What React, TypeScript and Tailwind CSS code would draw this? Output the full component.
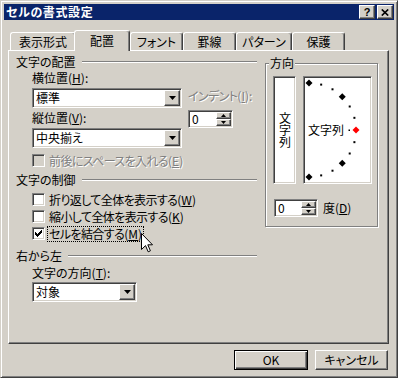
import React from 'react';

// classic win2000 bevels
const raised =
  'border border-t-white border-l-white border-r-[#404040] border-b-[#404040] shadow-[inset_-1px_-1px_0_#808080]';
const sunken =
  'border border-t-[#808080] border-l-[#808080] border-r-white border-b-white shadow-[inset_1px_1px_0_#404040,inset_-1px_-1px_0_#d4d0c8]';
const grayText = 'text-[#808080] [text-shadow:1px_1px_0_#fff]';

function Key({ k }: { k: string }) {
  return (
    <>
      (<span className="underline underline-offset-[1px]">{k}</span>)
    </>
  );
}

// kana-heavy labels run a little wide in Noto, tighten them
function Tight({ children }: { children: React.ReactNode }) {
  return <span className="tracking-[-0.6px]">{children}</span>;
}

function Combo({ value, className }: { value: string; className: string }) {
  return (
    <div className={`${className} h-[20px] p-[1px] flex bg-white ${sunken}`}>
      <div className="flex-1 pl-[2px] leading-[16px] whitespace-nowrap">{value}</div>
      <div className={`w-[16px] h-[16px] flex items-center justify-center bg-[#d4d0c8] ${raised}`}>
        <svg width="7" height="4" viewBox="0 0 7 4">
          <path d="M0 0h7L3.5 4z" fill="#000" />
        </svg>
      </div>
    </div>
  );
}

function Spin({ className }: { className: string }) {
  return (
    <div className={`${className} h-[18px] p-[1px] flex bg-white ${sunken}`}>
      <div className="flex-1 pl-[2px] leading-[14px]">0</div>
      <div className="w-[15px] flex flex-col">
        <div className={`h-[7px] flex items-center justify-center bg-[#d4d0c8] ${raised}`}>
          <svg width="5" height="3" viewBox="0 0 5 3">
            <path d="M2.5 0L5 3H0z" fill="#000" />
          </svg>
        </div>
        <div className={`h-[7px] flex items-center justify-center bg-[#d4d0c8] ${raised}`}>
          <svg width="5" height="3" viewBox="0 0 5 3">
            <path d="M0 0h5L2.5 3z" fill="#000" />
          </svg>
        </div>
      </div>
    </div>
  );
}

function CheckBox({ checked, disabled }: { checked?: boolean; disabled?: boolean }) {
  return (
    <div
      className={`w-[13px] h-[13px] shrink-0 p-[1px] flex items-center justify-center ${sunken} ${
        disabled ? 'bg-[#d4d0c8]' : 'bg-white'
      }`}
    >
      {checked && (
        <svg width="7" height="7" viewBox="0 0 7 7" shapeRendering="crispEdges">
          <path
            d="M6 0h1v1h-1z M5 1h2v1h-2z M0 2h1v1h-1z M4 2h3v1h-3z M0 3h2v1h-2z M3 3h3v1h-3z M0 4h5v1h-5z M1 5h3v1h-3z M2 6h1v1h-1z"
            fill="#000"
          />
        </svg>
      )}
    </div>
  );
}

function Section({ label }: { label: string }) {
  return (
    <div className="h-[14px] flex items-center">
      <span className="leading-[14px] whitespace-nowrap">{label}</span>
      <div className="flex-1 ml-[6px] h-[2px] border-t border-b border-t-[#808080] border-b-white" />
    </div>
  );
}

const tabs = [
  { label: '表示形式', w: 'w-[66px]' },
  { label: '配置', w: 'w-[56px]', active: true },
  { label: 'フォント', w: 'w-[53px]' },
  { label: '罫線', w: 'w-[53px]' },
  { label: 'パターン', w: 'w-[56px]' },
  { label: '保護', w: 'w-[53px]' },
];

function Dial() {
  const cx = 4;
  const cy = 52;
  const r = 47;
  const marks = [];
  for (let a = -90; a <= 90; a += 15) {
    const rad = (a * Math.PI) / 180;
    marks.push({ a, x: cx + r * Math.cos(rad), y: cy - r * Math.sin(rad) });
  }

  return (
    <div className={`relative w-[69px] h-[108px] p-[1px] bg-white ${sunken}`}>
      <svg width="65" height="104" viewBox="0 0 65 104">
        {marks.map((m) => {
          const big = Math.abs(m.a) === 90 || Math.abs(m.a) === 45 || m.a === 0;
          if (big) {
            const d = 3.5;
            return (
              <polygon
                key={m.a}
                points={`${m.x},${m.y - d} ${m.x + d},${m.y} ${m.x},${m.y + d} ${m.x - d},${m.y}`}
                fill={m.a === 0 ? '#ff0000' : '#000'}
              />
            );
          }
          return <rect key={m.a} x={m.x - 1} y={m.y - 1} width="2" height="2" fill="#000" />;
        })}
        <rect x="43.5" y="51.5" width="1.5" height="1.5" fill="#000" />
      </svg>
      <span className="absolute left-[4px] top-[46px] leading-[14px]">文字列</span>
    </div>
  );
}

export default function App() {
  return (
    <div className="relative w-[398px] h-[378px] bg-[#d4d0c8] p-[3px] border border-t-[#d4d0c8] border-l-[#d4d0c8] border-r-[#404040] border-b-[#404040] shadow-[inset_1px_1px_0_#fff,inset_-1px_-1px_0_#808080] text-[12px] text-black font-['Noto_Sans_CJK_JP',sans-serif] [font-feature-settings:'palt'] overflow-hidden select-none">
      {/* Title bar */}
      <div className="h-[16px] bg-[#0a246a] flex items-center pl-[2px] pr-[1px]">
        <span className="flex-1 text-white font-bold leading-[14px] tracking-[0.6px]">セルの書式設定</span>
        <div className="flex gap-[2px]">
          <div className={`w-[16px] h-[14px] flex items-center justify-center bg-[#d4d0c8] ${raised}`}>
            <span className="font-['Liberation_Sans',sans-serif] font-bold text-[11px] leading-[11px]">?</span>
          </div>
          <div className={`w-[16px] h-[14px] flex items-center justify-center bg-[#d4d0c8] ${raised}`}>
            <svg width="8" height="7" viewBox="0 0 8 7">
              <path d="M0.8 0.5L7.2 6.5M7.2 0.5L0.8 6.5" stroke="#000" strokeWidth="1.7" />
            </svg>
          </div>
        </div>
      </div>

      {/* Tabs */}
      <div className="mt-[10px] ml-[6px] h-[20px] flex items-end">
        {tabs.map((t) => (
          <div
            key={t.label}
            className={`${t.w} flex items-center justify-center bg-[#d4d0c8] border-t border-l border-r border-t-white border-l-white border-r-[#404040] shadow-[inset_-1px_0_0_#808080] rounded-t-[3px] whitespace-nowrap ${
              t.active ? 'relative z-10 -ml-[2px] h-[21px] -mb-[1px]' : 'h-[18px]'
            }`}
          >
            {t.label}
          </div>
        ))}
      </div>

      {/* Panel */}
      <div className="ml-[4px] w-[381px] h-[294px] border border-t-white border-l-white border-r-[#404040] border-b-[#404040] shadow-[inset_-1px_-1px_0_#808080] pt-[4px] pl-[7px] flex items-start">
        <div className="w-[241px] flex flex-col">
          <Section label="文字の配置" />
          <div className="mt-[2px] pl-[16px] flex">
            <div className="w-[150px] flex flex-col">
              <div className="h-[14px] leading-[14px]">
                横位置<Key k="H" />:
              </div>
              <Combo value="標準" className="mt-[3px] w-full" />
              <div className="mt-[3px] h-[14px] leading-[14px]">
                縦位置<Key k="V" />:
              </div>
              <Combo value="中央揃え" className="mt-[3px] w-full" />
            </div>
            <div className="ml-[6px] flex flex-col">
              <div className={`mt-[18px] h-[14px] leading-[14px] whitespace-nowrap ${grayText}`}>
                <Tight>インデント</Tight>
                <Key k="I" />:
              </div>
              <Spin className="mt-[7px] w-[45px]" />
            </div>
          </div>

          <div className="mt-[6px] pl-[16px] h-[13px] flex items-center">
            <CheckBox disabled />
            <span className={`ml-[4px] leading-[14px] whitespace-nowrap ${grayText}`}>
              <Tight>前後にスペースを入れる</Tight>
              <Key k="E" />
            </span>
          </div>

          <div className="mt-[6px]">
            <Section label="文字の制御" />
          </div>
          <div className="mt-[4px] pl-[16px] flex flex-col">
            <div className="h-[17px] flex items-center">
              <CheckBox />
              <span className="ml-[4px] leading-[14px] whitespace-nowrap">
                <Tight>折り返して全体を表示する</Tight>
                <Key k="W" />
              </span>
            </div>
            <div className="h-[17px] flex items-center">
              <CheckBox />
              <span className="ml-[4px] leading-[14px] whitespace-nowrap">
                <Tight>縮小して全体を表示する</Tight>
                <Key k="K" />
              </span>
            </div>
            <div className="h-[17px] flex items-center">
              <CheckBox checked />
              <span className="ml-[2px] h-[16px] px-[1px] border border-dotted border-black flex items-center leading-[14px] whitespace-nowrap">
                <Tight>セルを結合する</Tight>
                <Key k="M" />
              </span>
            </div>
          </div>

          <div className="mt-[7px]">
            <Section label="右から左" />
          </div>
          <div className="mt-[3px] pl-[16px] h-[14px] leading-[14px]">
            文字の方向<Key k="T" />:
          </div>
          <Combo value="対象" className="mt-[2px] ml-[16px] w-[105px]" />
        </div>

        {/* Orientation group */}
        <div className="relative ml-[8px] mt-[8px] w-[113px] h-[164px] border border-[#808080] shadow-[inset_1px_1px_0_#fff,1px_1px_0_#fff] pt-[12px] pl-[7px]">
          <span className="absolute left-[3px] -top-[8px] px-[1px] bg-[#d4d0c8] leading-[14px]">方向</span>
          <div className="flex">
            <div className={`w-[23px] h-[108px] p-[1px] bg-white ${sunken} flex items-center justify-center`}>
              <span className="[writing-mode:vertical-rl] leading-[14px] tracking-[0px]">文字列</span>
            </div>
            <div className="ml-[7px]">
              <Dial />
            </div>
          </div>
          <div className="mt-[15px] ml-[1px] flex items-center">
            <Spin className="w-[44px]" />
            <span className="ml-[5px] leading-[14px] whitespace-nowrap">
              度<Key k="D" />
            </span>
          </div>
        </div>
      </div>

      {/* Buttons */}
      <div className="mt-[6px] ml-[4px] w-[381px] pr-[1px] flex justify-end gap-[7px]">
        <div className="w-[74px] h-[20px] flex items-center justify-center border border-black bg-[#d4d0c8] shadow-[inset_1px_1px_0_#fff,inset_-1px_-1px_0_#404040,inset_-2px_-2px_0_#808080] leading-[14px]">
          OK
        </div>
        <div className={`w-[73px] h-[20px] flex items-center justify-center bg-[#d4d0c8] ${raised} leading-[14px]`}>
          キャンセル
        </div>
      </div>

      {/* Mouse pointer */}
      <svg className="absolute left-[140px] top-[232px]" width="13" height="20" viewBox="0 0 13 20">
        <path
          d="M0.5 0.5V16.5L4.5 12.6L7.2 18.8L9.4 17.8L6.8 11.8H11.5Z"
          fill="#fff"
          stroke="#000"
          strokeWidth="1"
        />
      </svg>
    </div>
  );
}
